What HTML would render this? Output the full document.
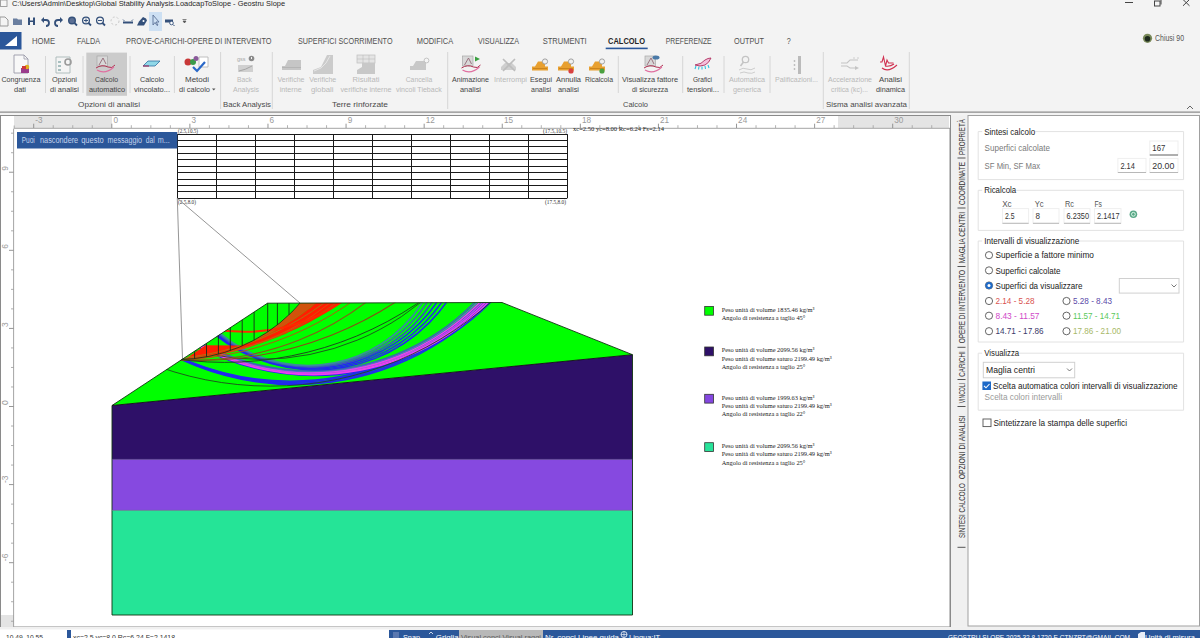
<!DOCTYPE html>
<html><head><meta charset="utf-8"><style>html,body{margin:0;padding:0;background:#f3f3f3;overflow:hidden}svg{display:block}</style></head>
<body><svg width="1200" height="638" viewBox="0 0 1200 638">
<rect x="0" y="0" width="1200" height="638" fill="#f3f3f3" stroke="none" stroke-width="1" />
<g>
<rect x="0.5" y="0" width="6.5" height="6.5" fill="#f6f6f6" stroke="#999" stroke-width="0.9" />
<text x="12" y="6.1" font-size="8" fill="#262626" font-weight="400" text-anchor="start" font-family='"Liberation Sans", sans-serif' textLength="273" lengthAdjust="spacingAndGlyphs" >C:\Users\Admin\Desktop\Global Stability Analysis.LoadcapToSlope - Geostru Slope</text>
<line x1="1125" y1="2.5" x2="1133" y2="2.5" stroke="#444" stroke-width="1" />
<rect x="1154.5" y="1" width="5.5" height="5" fill="#f3f3f3" stroke="#444" stroke-width="1" />
<path d="M1156,-0.5 h5 v5" fill="none" stroke="#444" stroke-width="1"/>
<line x1="1183" y1="-0.5" x2="1189.5" y2="5.8" stroke="#444" stroke-width="1" />
<line x1="1189.5" y1="-0.5" x2="1183" y2="5.8" stroke="#444" stroke-width="1" />
</g>
<rect x="149" y="12" width="13" height="19" fill="#cde0f3" stroke="none" stroke-width="1" />
<path d="M0,17 h5 l3,3 v6 h-8z" fill="#f4f4f4" stroke="#999" stroke-width="1"/>
<path d="M13,18.5 h4 l1,1 h4 v5.5 h-9z" fill="#6a7fa0"/>
<path d="M28,17.5 h2 v3 h3 v-3 h2 v7.5 h-2 v-3 h-3 v3 h-2z" fill="#34507a"/>
<path d="M42,20 h4 a3,3 0 0 1 0,6" fill="none" stroke="#34507a" stroke-width="1.8"/><path d="M41,20 l3,-3 v6z" fill="#34507a"/>
<path d="M62,20 h-4 a3,3 0 0 0 0,6" fill="none" stroke="#34507a" stroke-width="1.8"/><path d="M63,20 l-3,-3 v6z" fill="#34507a"/>
<circle cx="72" cy="20.5" r="3.3" fill="#5b6f94" stroke="#34507a" stroke-width="1.4"/><line x1="74.5" y1="23" x2="77" y2="25.5" stroke="#34507a" stroke-width="1.8"/>
<circle cx="86" cy="20.5" r="3.4" fill="none" stroke="#34507a" stroke-width="1.3"/><line x1="88.5" y1="23" x2="91" y2="25.5" stroke="#34507a" stroke-width="1.8"/><path d="M84,20.5h4M86,18.5v4" stroke="#34507a" stroke-width="1"/>
<circle cx="100" cy="20.5" r="3.4" fill="none" stroke="#34507a" stroke-width="1.3"/><line x1="102.5" y1="23" x2="105" y2="25.5" stroke="#34507a" stroke-width="1.8"/><path d="M98,20.5h4" stroke="#34507a" stroke-width="1"/>
<circle cx="115" cy="21" r="4" fill="none" stroke="#c8c8c8" stroke-width="1" stroke-dasharray="2,2"/>
<path d="M123,22.5 h10" stroke="#34507a" stroke-width="2"/><path d="M123,19.5 l1.5,1.5 M133,19.5 l-1.5,1.5" stroke="#34507a" stroke-width="0.8"/>
<path d="M137,25.5 l2,-4 l4,-4.5 l3,1.5 l1,2 l-3,5z" fill="#34507a"/><circle cx="143.5" cy="21" r="1" fill="#fff"/>
<path d="M153,15 v10 l2,-2.5 l2,3 l1,-0.5 l-2,-3 h3z" fill="none" stroke="#5c7399" stroke-width="0.9"/>
<path d="M165,19.5 h8 v3 h-8z" fill="#34507a"/><circle cx="171.5" cy="23" r="1.8" fill="#fff" stroke="#34507a" stroke-width="0.9"/><line x1="173" y1="24.5" x2="174.5" y2="26" stroke="#34507a" stroke-width="1"/>
<path d="M182.5,19.5 h4 M183,21 h3 l-1.5,2z" stroke="#555" stroke-width="0.7" fill="#555"/>
<rect x="0" y="32" width="21.5" height="17.5" fill="#2b579a" stroke="none" stroke-width="1" />
<path d="M5,46 L17,36 L17,46 Z" fill="#fff"/>
<text x="32" y="44.2" font-size="8.6" fill="#505050" font-weight="400" text-anchor="start" font-family='"Liberation Sans", sans-serif' textLength="23" lengthAdjust="spacingAndGlyphs" >HOME</text>
<text x="77" y="44.2" font-size="8.6" fill="#505050" font-weight="400" text-anchor="start" font-family='"Liberation Sans", sans-serif' textLength="23" lengthAdjust="spacingAndGlyphs" >FALDA</text>
<text x="126" y="44.2" font-size="8.6" fill="#505050" font-weight="400" text-anchor="start" font-family='"Liberation Sans", sans-serif' textLength="145.5" lengthAdjust="spacingAndGlyphs" >PROVE-CARICHI-OPERE DI INTERVENTO</text>
<text x="298" y="44.2" font-size="8.6" fill="#505050" font-weight="400" text-anchor="start" font-family='"Liberation Sans", sans-serif' textLength="94.5" lengthAdjust="spacingAndGlyphs" >SUPERFICI SCORRIMENTO</text>
<text x="416.7" y="44.2" font-size="8.6" fill="#505050" font-weight="400" text-anchor="start" font-family='"Liberation Sans", sans-serif' textLength="36.5" lengthAdjust="spacingAndGlyphs" >MODIFICA</text>
<text x="478" y="44.2" font-size="8.6" fill="#505050" font-weight="400" text-anchor="start" font-family='"Liberation Sans", sans-serif' textLength="41" lengthAdjust="spacingAndGlyphs" >VISUALIZZA</text>
<text x="542.7" y="44.2" font-size="8.6" fill="#505050" font-weight="400" text-anchor="start" font-family='"Liberation Sans", sans-serif' textLength="44" lengthAdjust="spacingAndGlyphs" >STRUMENTI</text>
<text x="665.7" y="44.2" font-size="8.6" fill="#505050" font-weight="400" text-anchor="start" font-family='"Liberation Sans", sans-serif' textLength="46" lengthAdjust="spacingAndGlyphs" >PREFERENZE</text>
<text x="734" y="44.2" font-size="8.6" fill="#505050" font-weight="400" text-anchor="start" font-family='"Liberation Sans", sans-serif' textLength="30" lengthAdjust="spacingAndGlyphs" >OUTPUT</text>
<text x="786.7" y="44.2" font-size="8.6" fill="#505050" font-weight="400" text-anchor="start" font-family='"Liberation Sans", sans-serif' textLength="4" lengthAdjust="spacingAndGlyphs" >?</text>
<text x="608" y="44.2" font-size="8.6" fill="#262626" font-weight="700" text-anchor="start" font-family='"Liberation Sans", sans-serif' textLength="37" lengthAdjust="spacingAndGlyphs" >CALCOLO</text>
<rect x="605.7" y="47.6" width="42" height="1.6" fill="#2b579a" stroke="none" stroke-width="1" />
<circle cx="1147.5" cy="38.3" r="4.6" fill="#7a8a5a"/><circle cx="1147.5" cy="38.8" r="2.8" fill="#1d2a1d"/>
<text x="1155" y="41" font-size="8.6" fill="#555" font-weight="400" text-anchor="start" font-family='"Liberation Sans", sans-serif' textLength="29" lengthAdjust="spacingAndGlyphs" >Chiusi 90</text>
<rect x="86.3" y="52.6" width="40.7" height="43.2" fill="#cbcbcb" stroke="none" stroke-width="1" />
<text x="1.4" y="82" font-size="7.5" fill="#454545" font-weight="400" text-anchor="start" font-family='"Liberation Sans", sans-serif' textLength="39" lengthAdjust="spacingAndGlyphs" >Congruenza</text>
<text x="14" y="92" font-size="7.5" fill="#454545" font-weight="400" text-anchor="start" font-family='"Liberation Sans", sans-serif' textLength="12" lengthAdjust="spacingAndGlyphs" >dati</text>
<text x="52" y="82" font-size="7.5" fill="#454545" font-weight="400" text-anchor="start" font-family='"Liberation Sans", sans-serif' textLength="25" lengthAdjust="spacingAndGlyphs" >Opzioni</text>
<text x="50" y="92" font-size="7.5" fill="#454545" font-weight="400" text-anchor="start" font-family='"Liberation Sans", sans-serif' textLength="29" lengthAdjust="spacingAndGlyphs" >di analisi</text>
<text x="95" y="82" font-size="7.5" fill="#454545" font-weight="400" text-anchor="start" font-family='"Liberation Sans", sans-serif' textLength="23" lengthAdjust="spacingAndGlyphs" >Calcolo</text>
<text x="89" y="92" font-size="7.5" fill="#454545" font-weight="400" text-anchor="start" font-family='"Liberation Sans", sans-serif' textLength="36" lengthAdjust="spacingAndGlyphs" >automatico</text>
<text x="140" y="82" font-size="7.5" fill="#454545" font-weight="400" text-anchor="start" font-family='"Liberation Sans", sans-serif' textLength="24" lengthAdjust="spacingAndGlyphs" >Calcolo</text>
<text x="134" y="92" font-size="7.5" fill="#454545" font-weight="400" text-anchor="start" font-family='"Liberation Sans", sans-serif' textLength="36" lengthAdjust="spacingAndGlyphs" >vincolato...</text>
<text x="185" y="82" font-size="7.5" fill="#454545" font-weight="400" text-anchor="start" font-family='"Liberation Sans", sans-serif' textLength="24" lengthAdjust="spacingAndGlyphs" >Metodi</text>
<text x="179" y="92" font-size="7.5" fill="#454545" font-weight="400" text-anchor="start" font-family='"Liberation Sans", sans-serif' textLength="31" lengthAdjust="spacingAndGlyphs" >di calcolo</text>
<text x="237" y="82" font-size="7.5" fill="#b9b9b9" font-weight="400" text-anchor="start" font-family='"Liberation Sans", sans-serif' textLength="15" lengthAdjust="spacingAndGlyphs" >Back</text>
<text x="233" y="92" font-size="7.5" fill="#b9b9b9" font-weight="400" text-anchor="start" font-family='"Liberation Sans", sans-serif' textLength="26" lengthAdjust="spacingAndGlyphs" >Analysis</text>
<text x="277.5" y="82" font-size="7.5" fill="#b9b9b9" font-weight="400" text-anchor="start" font-family='"Liberation Sans", sans-serif' textLength="27" lengthAdjust="spacingAndGlyphs" >Verifiche</text>
<text x="279.7" y="92" font-size="7.5" fill="#b9b9b9" font-weight="400" text-anchor="start" font-family='"Liberation Sans", sans-serif' textLength="22" lengthAdjust="spacingAndGlyphs" >interne</text>
<text x="309.3" y="82" font-size="7.5" fill="#b9b9b9" font-weight="400" text-anchor="start" font-family='"Liberation Sans", sans-serif' textLength="27" lengthAdjust="spacingAndGlyphs" >Verifiche</text>
<text x="311" y="92" font-size="7.5" fill="#b9b9b9" font-weight="400" text-anchor="start" font-family='"Liberation Sans", sans-serif' textLength="22.5" lengthAdjust="spacingAndGlyphs" >globali</text>
<text x="352.5" y="82" font-size="7.5" fill="#b9b9b9" font-weight="400" text-anchor="start" font-family='"Liberation Sans", sans-serif' textLength="27" lengthAdjust="spacingAndGlyphs" >Risultati</text>
<text x="340.5" y="92" font-size="7.5" fill="#b9b9b9" font-weight="400" text-anchor="start" font-family='"Liberation Sans", sans-serif' textLength="51" lengthAdjust="spacingAndGlyphs" >verifiche interne</text>
<text x="405.7" y="82" font-size="7.5" fill="#b9b9b9" font-weight="400" text-anchor="start" font-family='"Liberation Sans", sans-serif' textLength="26.5" lengthAdjust="spacingAndGlyphs" >Cancella</text>
<text x="396" y="92" font-size="7.5" fill="#b9b9b9" font-weight="400" text-anchor="start" font-family='"Liberation Sans", sans-serif' textLength="45.7" lengthAdjust="spacingAndGlyphs" >vincoli Tieback</text>
<text x="452" y="82" font-size="7.5" fill="#454545" font-weight="400" text-anchor="start" font-family='"Liberation Sans", sans-serif' textLength="37" lengthAdjust="spacingAndGlyphs" >Animazione</text>
<text x="460" y="92" font-size="7.5" fill="#454545" font-weight="400" text-anchor="start" font-family='"Liberation Sans", sans-serif' textLength="21" lengthAdjust="spacingAndGlyphs" >analisi</text>
<text x="494" y="82" font-size="7.5" fill="#b9b9b9" font-weight="400" text-anchor="start" font-family='"Liberation Sans", sans-serif' textLength="33" lengthAdjust="spacingAndGlyphs" >Interrompi</text>
<text x="530" y="82" font-size="7.5" fill="#454545" font-weight="400" text-anchor="start" font-family='"Liberation Sans", sans-serif' textLength="22" lengthAdjust="spacingAndGlyphs" >Esegui</text>
<text x="531" y="92" font-size="7.5" fill="#454545" font-weight="400" text-anchor="start" font-family='"Liberation Sans", sans-serif' textLength="20" lengthAdjust="spacingAndGlyphs" >analisi</text>
<text x="556" y="82" font-size="7.5" fill="#454545" font-weight="400" text-anchor="start" font-family='"Liberation Sans", sans-serif' textLength="25" lengthAdjust="spacingAndGlyphs" >Annulla</text>
<text x="558" y="92" font-size="7.5" fill="#454545" font-weight="400" text-anchor="start" font-family='"Liberation Sans", sans-serif' textLength="21" lengthAdjust="spacingAndGlyphs" >analisi</text>
<text x="585" y="82" font-size="7.5" fill="#454545" font-weight="400" text-anchor="start" font-family='"Liberation Sans", sans-serif' textLength="28" lengthAdjust="spacingAndGlyphs" >Ricalcola</text>
<text x="622" y="82" font-size="7.5" fill="#454545" font-weight="400" text-anchor="start" font-family='"Liberation Sans", sans-serif' textLength="56" lengthAdjust="spacingAndGlyphs" >Visualizza fattore</text>
<text x="632" y="92" font-size="7.5" fill="#454545" font-weight="400" text-anchor="start" font-family='"Liberation Sans", sans-serif' textLength="36" lengthAdjust="spacingAndGlyphs" >di sicurezza</text>
<text x="693" y="82" font-size="7.5" fill="#454545" font-weight="400" text-anchor="start" font-family='"Liberation Sans", sans-serif' textLength="19" lengthAdjust="spacingAndGlyphs" >Grafici</text>
<text x="687" y="92" font-size="7.5" fill="#454545" font-weight="400" text-anchor="start" font-family='"Liberation Sans", sans-serif' textLength="32" lengthAdjust="spacingAndGlyphs" >tensioni...</text>
<text x="729" y="82" font-size="7.5" fill="#b9b9b9" font-weight="400" text-anchor="start" font-family='"Liberation Sans", sans-serif' textLength="36" lengthAdjust="spacingAndGlyphs" >Automatica</text>
<text x="733" y="92" font-size="7.5" fill="#b9b9b9" font-weight="400" text-anchor="start" font-family='"Liberation Sans", sans-serif' textLength="28" lengthAdjust="spacingAndGlyphs" >generica</text>
<text x="775" y="82" font-size="7.5" fill="#b9b9b9" font-weight="400" text-anchor="start" font-family='"Liberation Sans", sans-serif' textLength="43" lengthAdjust="spacingAndGlyphs" >Palificazioni...</text>
<text x="828" y="82" font-size="7.5" fill="#b9b9b9" font-weight="400" text-anchor="start" font-family='"Liberation Sans", sans-serif' textLength="44" lengthAdjust="spacingAndGlyphs" >Accelerazione</text>
<text x="831" y="92" font-size="7.5" fill="#b9b9b9" font-weight="400" text-anchor="start" font-family='"Liberation Sans", sans-serif' textLength="37" lengthAdjust="spacingAndGlyphs" >critica (kc)...</text>
<text x="879" y="82" font-size="7.5" fill="#454545" font-weight="400" text-anchor="start" font-family='"Liberation Sans", sans-serif' textLength="23" lengthAdjust="spacingAndGlyphs" >Analisi</text>
<text x="876" y="92" font-size="7.5" fill="#454545" font-weight="400" text-anchor="start" font-family='"Liberation Sans", sans-serif' textLength="29" lengthAdjust="spacingAndGlyphs" >dinamica</text>
<path d="M212,88.5 h3.5 l-1.75,2z" fill="#555"/>
<text x="78" y="107.3" font-size="8" fill="#4a4a4a" font-weight="400" text-anchor="start" font-family='"Liberation Sans", sans-serif' textLength="62" lengthAdjust="spacingAndGlyphs" >Opzioni di analisi</text>
<text x="223" y="107.3" font-size="8" fill="#4a4a4a" font-weight="400" text-anchor="start" font-family='"Liberation Sans", sans-serif' textLength="48" lengthAdjust="spacingAndGlyphs" >Back Analysis</text>
<text x="332" y="107.3" font-size="8" fill="#4a4a4a" font-weight="400" text-anchor="start" font-family='"Liberation Sans", sans-serif' textLength="56" lengthAdjust="spacingAndGlyphs" >Terre rinforzate</text>
<text x="623" y="107.3" font-size="8" fill="#4a4a4a" font-weight="400" text-anchor="start" font-family='"Liberation Sans", sans-serif' textLength="25" lengthAdjust="spacingAndGlyphs" >Calcolo</text>
<text x="826" y="107.3" font-size="8" fill="#4a4a4a" font-weight="400" text-anchor="start" font-family='"Liberation Sans", sans-serif' textLength="81" lengthAdjust="spacingAndGlyphs" >Sisma analisi avanzata</text>
<line x1="45.5" y1="56" x2="45.5" y2="93" stroke="#d6d6d6" stroke-width="1" />
<line x1="83" y1="56" x2="83" y2="93" stroke="#d6d6d6" stroke-width="1" />
<line x1="130" y1="56" x2="130" y2="93" stroke="#d6d6d6" stroke-width="1" />
<line x1="174.4" y1="56" x2="174.4" y2="93" stroke="#d6d6d6" stroke-width="1" />
<line x1="618.3" y1="56" x2="618.3" y2="93" stroke="#d6d6d6" stroke-width="1" />
<line x1="682.7" y1="56" x2="682.7" y2="93" stroke="#d6d6d6" stroke-width="1" />
<line x1="724" y1="56" x2="724" y2="93" stroke="#d6d6d6" stroke-width="1" />
<line x1="770" y1="56" x2="770" y2="93" stroke="#d6d6d6" stroke-width="1" />
<line x1="220.6" y1="52" x2="220.6" y2="109" stroke="#d6d6d6" stroke-width="1" />
<line x1="272.3" y1="52" x2="272.3" y2="109" stroke="#d6d6d6" stroke-width="1" />
<line x1="447.7" y1="52" x2="447.7" y2="109" stroke="#d6d6d6" stroke-width="1" />
<line x1="823.3" y1="52" x2="823.3" y2="109" stroke="#d6d6d6" stroke-width="1" />
<line x1="909.3" y1="52" x2="909.3" y2="109" stroke="#d6d6d6" stroke-width="1" />
<path d="M1187,109 l3,-3 l3,3" fill="none" stroke="#555" stroke-width="0.9"/>
<path d="M14,55 h10 l4,4 v14 h-14z" fill="#f8f8f8" stroke="#9a9aa8" stroke-width="0.9"/><path d="M24,55 v4 h4" fill="none" stroke="#9a9aa8" stroke-width="0.8"/>
<rect x="21" y="68" width="8" height="5" fill="#9a3c8c"/><circle cx="27" cy="67" r="2.3" fill="#e0b020"/><rect x="22" y="66" width="4" height="3" fill="#d03838"/>
<path d="M56,57 h14 v16 h-14z" fill="#f4f4f4" stroke="#a8b8b8" stroke-width="0.9"/><circle cx="68" cy="62" r="3" fill="none" stroke="#9a9a9a" stroke-width="1.6"/><path d="M58,62 h3 M58,66 h3 M58,70 h3" stroke="#5a8a8a" stroke-width="1.2"/>
<rect x="97" y="56" width="10.5" height="10" fill="#d8d8d8" stroke="#a8a8a8" stroke-width="0.7"/><path d="M99,65 l4,-7 l3,6" fill="none" stroke="#8a5a6a" stroke-width="0.8"/><path d="M96,68 q6,-4 12,-1 q4,2 7,-2" fill="none" stroke="#b03050" stroke-width="1"/><path d="M97,70 q8,5 17,-3" fill="none" stroke="#e070a0" stroke-width="1.1"/>
<path d="M143,66 l5,-5 h12 l-5,5z" fill="#8fd8e8" stroke="#3070a0" stroke-width="0.8"/><path d="M143,66 h6" stroke="#a03060" stroke-width="1.2"/>
<path d="M199,57 h9 v10 h-9z" fill="#fff" stroke="#b0b0b0" stroke-width="0.8"/><circle cx="188" cy="62" r="3.5" fill="#c83838"/><circle cx="193" cy="62" r="3" fill="#3a9a4a"/><circle cx="196" cy="58.5" r="2.5" fill="#8a5a9a"/><path d="M193,67 l4,4 l8,-9" fill="none" stroke="#2a68c8" stroke-width="2.2"/>
<circle cx="251.5" cy="58.5" r="2.8" fill="#8a8a8a"/><path d="M251.5,57v2" stroke="#fff" stroke-width="0.9"/><text x="237" y="61" font-size="5.5" fill="#a8a8a8" font-family='"Liberation Sans"'>gss</text><rect x="238" y="65" width="15" height="7" fill="#d0d0d0"/><path d="M239,71 q6,-1 13,-5" fill="none" stroke="#a0a0a0" stroke-width="0.9"/>
<path d="M282,70 v-4 h3 l3,-6 h13 v10z" fill="#c6c6c6"/><path d="M282,67.5 h19" stroke="#aaa" stroke-width="0.6"/>
<path d="M313,74 v-4 l8,-3 l6,-12 h6 v19z" fill="#cbcbcb"/><path d="M314,71 q8,-2 12,-8 l4,-7" fill="none" stroke="#e8e8e8" stroke-width="0.9"/>
<rect x="357" y="55" width="18" height="8" fill="#e4e4e4" stroke="#bdbdbd" stroke-width="0.7"/><path d="M363,55v8M369,55v8M357,59h18" stroke="#bdbdbd" stroke-width="0.6"/><path d="M357,74 v-4 l5,-3 v-4 h13 v11z" fill="#c8c8c8"/>
<path d="M410,70 v-4 h3 l3,-5 h10 v9z" fill="#c8c8c8"/><circle cx="426.5" cy="60.5" r="2.4" fill="#f4f4f4" stroke="#bdbdbd" stroke-width="0.9"/>
<rect x="462.5" y="56" width="10.5" height="10" fill="#d8d8d8" stroke="#a8a8a8" stroke-width="0.7"/><path d="M464.5,65 l4,-7 l3,6" fill="none" stroke="#8a5a6a" stroke-width="0.8"/><path d="M461.5,68 q6,-4 12,-1 q4,2 7,-2" fill="none" stroke="#b03050" stroke-width="1"/><path d="M462.5,70 q8,5 17,-3" fill="none" stroke="#e070a0" stroke-width="1.1"/><path d="M475,56.5 l5,2.5 l-5,2.5z" fill="#3aa040"/>
<path d="M501,70 v-3 l4,-4 h7 l4,4 v3z" fill="#cfcfcf"/><path d="M503,59 l12,12 M515,59 l-12,12" stroke="#bdbdbd" stroke-width="1.6"/>
<path d="M532,70.5 v-4 h3 l3,-5 h7 v5 h3 v4z" fill="#e8a030"/><path d="M533,68.5 h14" stroke="#b87010" stroke-width="0.6"/><circle cx="545" cy="61.5" r="2.6" fill="#f0f0f0" stroke="#999" stroke-width="0.9"/>
<path d="M558,70.5 v-4 h3 l3,-5 h7 v5 h3 v4z" fill="#e8a030"/><path d="M559,68.5 h14" stroke="#b87010" stroke-width="0.6"/><circle cx="571" cy="61.5" r="2.6" fill="#f0f0f0" stroke="#999" stroke-width="0.9"/>
<circle cx="571" cy="71" r="2.6" fill="#d84040"/>
<path d="M589,70.5 v-4 h3 l3,-5 h7 v5 h3 v4z" fill="#e8a030"/><path d="M590,68.5 h14" stroke="#b87010" stroke-width="0.6"/><circle cx="602" cy="61.5" r="2.6" fill="#f0f0f0" stroke="#999" stroke-width="0.9"/>
<circle cx="602" cy="71" r="2.6" fill="#4aa040"/>
<rect x="645" y="56" width="10.5" height="10" fill="#d8d8d8" stroke="#a8a8a8" stroke-width="0.7"/><path d="M647,65 l4,-7 l3,6" fill="none" stroke="#8a5a6a" stroke-width="0.8"/><path d="M644,68 q6,-4 12,-1 q4,2 7,-2" fill="none" stroke="#b03050" stroke-width="1"/><path d="M645,70 q8,5 17,-3" fill="none" stroke="#e070a0" stroke-width="1.1"/><ellipse cx="656" cy="57.5" rx="3.5" ry="2" fill="#4a7aa8"/>
<path d="M695,65 q7,-1 10,-5 q3,-2 6,-2 q-2,5 -6,7 q-5,2 -10,0z" fill="#f4c0dc" stroke="#b03060" stroke-width="0.9"/><path d="M696,66 l-1,3 M699,66.5 l-0.5,3 M702,66.5 v3 M705,66 l0.5,3 M708,65 l1,3" stroke="#30c0e0" stroke-width="1.1"/>
<circle cx="745.5" cy="59.5" r="3.2" fill="none" stroke="#c4c4c4" stroke-width="1.3"/><path d="M743.5,62 l-3,4" stroke="#c4c4c4" stroke-width="1.6"/><path d="M739,70 q4,-3 8,-1 q4,2 8,-1 M740,73 q4,-2 8,0 q4,1 7,-1" fill="none" stroke="#c8c8c8" stroke-width="0.9"/>
<rect x="798" y="56" width="3" height="18" fill="#bbbbbb"/><circle cx="794.5" cy="61" r="0.9" fill="#bbb"/><circle cx="794.5" cy="65" r="0.9" fill="#bbb"/><circle cx="794.5" cy="69" r="0.9" fill="#bbb"/>
<path d="M841,63 h6 l3,-3 h8 M841,66 h6 l3,2 h6" fill="none" stroke="#c4c4c4" stroke-width="1.1"/><path d="M855,66 l4,2 l-4,2z" fill="#c4c4c4"/><path d="M853,58 h2 M857,58 h2" stroke="#c4c4c4" stroke-width="0.8"/>
<path d="M880,62 h2 l1.5,-5 l2,9 l1.5,-6 l1.5,3 h5" fill="none" stroke="#d03050" stroke-width="1.1"/><path d="M882,68 q6,5 15,-3 M885,66 q5,1 9,-2" fill="none" stroke="#d03050" stroke-width="1.1"/>
<line x1="0" y1="112.2" x2="1200" y2="112.2" stroke="#8c8c8c" stroke-width="1.2" />
<rect x="0.5" y="115.5" width="949.5" height="511.5" fill="#fff" stroke="#8a8a8a" stroke-width="1" />
<rect x="1" y="116" width="949" height="12" fill="#fff" stroke="none" stroke-width="1" />
<rect x="14" y="116" width="98" height="12" fill="#e4e4e4" stroke="none" stroke-width="1" />
<rect x="838" y="116" width="111" height="12" fill="#e4e4e4" stroke="none" stroke-width="1" />
<line x1="14" y1="128.3" x2="950" y2="128.3" stroke="#9a9a9a" stroke-width="0.9" />
<line x1="33.709999999999994" y1="123.7" x2="33.709999999999994" y2="128" stroke="#8a8a8a" stroke-width="0.9" />
<text x="35.3" y="122.9" font-size="8.2" fill="#9a9a9a" font-weight="400" text-anchor="start" font-family='"Liberation Sans", sans-serif' >-3</text>
<line x1="53.232499999999995" y1="125.2" x2="53.232499999999995" y2="128" stroke="#a0a0a0" stroke-width="0.8" />
<line x1="72.755" y1="125.2" x2="72.755" y2="128" stroke="#a0a0a0" stroke-width="0.8" />
<line x1="92.2775" y1="125.2" x2="92.2775" y2="128" stroke="#a0a0a0" stroke-width="0.8" />
<line x1="111.8" y1="123.7" x2="111.8" y2="128" stroke="#8a8a8a" stroke-width="0.9" />
<text x="113.4" y="122.9" font-size="8.2" fill="#9a9a9a" font-weight="400" text-anchor="start" font-family='"Liberation Sans", sans-serif' >0</text>
<line x1="131.3225" y1="125.2" x2="131.3225" y2="128" stroke="#a0a0a0" stroke-width="0.8" />
<line x1="150.845" y1="125.2" x2="150.845" y2="128" stroke="#a0a0a0" stroke-width="0.8" />
<line x1="170.3675" y1="125.2" x2="170.3675" y2="128" stroke="#a0a0a0" stroke-width="0.8" />
<line x1="189.89" y1="123.7" x2="189.89" y2="128" stroke="#8a8a8a" stroke-width="0.9" />
<text x="191.5" y="122.9" font-size="8.2" fill="#9a9a9a" font-weight="400" text-anchor="start" font-family='"Liberation Sans", sans-serif' >3</text>
<line x1="209.41250000000002" y1="125.2" x2="209.41250000000002" y2="128" stroke="#a0a0a0" stroke-width="0.8" />
<line x1="228.935" y1="125.2" x2="228.935" y2="128" stroke="#a0a0a0" stroke-width="0.8" />
<line x1="248.45749999999998" y1="125.2" x2="248.45749999999998" y2="128" stroke="#a0a0a0" stroke-width="0.8" />
<line x1="267.98" y1="123.7" x2="267.98" y2="128" stroke="#8a8a8a" stroke-width="0.9" />
<text x="269.6" y="122.9" font-size="8.2" fill="#9a9a9a" font-weight="400" text-anchor="start" font-family='"Liberation Sans", sans-serif' >6</text>
<line x1="287.5025" y1="125.2" x2="287.5025" y2="128" stroke="#a0a0a0" stroke-width="0.8" />
<line x1="307.02500000000003" y1="125.2" x2="307.02500000000003" y2="128" stroke="#a0a0a0" stroke-width="0.8" />
<line x1="326.5475" y1="125.2" x2="326.5475" y2="128" stroke="#a0a0a0" stroke-width="0.8" />
<line x1="346.07" y1="123.7" x2="346.07" y2="128" stroke="#8a8a8a" stroke-width="0.9" />
<text x="347.7" y="122.9" font-size="8.2" fill="#9a9a9a" font-weight="400" text-anchor="start" font-family='"Liberation Sans", sans-serif' >9</text>
<line x1="365.59250000000003" y1="125.2" x2="365.59250000000003" y2="128" stroke="#a0a0a0" stroke-width="0.8" />
<line x1="385.115" y1="125.2" x2="385.115" y2="128" stroke="#a0a0a0" stroke-width="0.8" />
<line x1="404.63750000000005" y1="125.2" x2="404.63750000000005" y2="128" stroke="#a0a0a0" stroke-width="0.8" />
<line x1="424.16" y1="123.7" x2="424.16" y2="128" stroke="#8a8a8a" stroke-width="0.9" />
<text x="425.8" y="122.9" font-size="8.2" fill="#9a9a9a" font-weight="400" text-anchor="start" font-family='"Liberation Sans", sans-serif' >12</text>
<line x1="443.6825" y1="125.2" x2="443.6825" y2="128" stroke="#a0a0a0" stroke-width="0.8" />
<line x1="463.20500000000004" y1="125.2" x2="463.20500000000004" y2="128" stroke="#a0a0a0" stroke-width="0.8" />
<line x1="482.7275" y1="125.2" x2="482.7275" y2="128" stroke="#a0a0a0" stroke-width="0.8" />
<line x1="502.25000000000006" y1="123.7" x2="502.25000000000006" y2="128" stroke="#8a8a8a" stroke-width="0.9" />
<text x="503.9" y="122.9" font-size="8.2" fill="#9a9a9a" font-weight="400" text-anchor="start" font-family='"Liberation Sans", sans-serif' >15</text>
<line x1="521.7725" y1="125.2" x2="521.7725" y2="128" stroke="#a0a0a0" stroke-width="0.8" />
<line x1="541.295" y1="125.2" x2="541.295" y2="128" stroke="#a0a0a0" stroke-width="0.8" />
<line x1="560.8175" y1="125.2" x2="560.8175" y2="128" stroke="#a0a0a0" stroke-width="0.8" />
<line x1="580.34" y1="123.7" x2="580.34" y2="128" stroke="#8a8a8a" stroke-width="0.9" />
<text x="581.9" y="122.9" font-size="8.2" fill="#9a9a9a" font-weight="400" text-anchor="start" font-family='"Liberation Sans", sans-serif' >18</text>
<line x1="599.8625" y1="125.2" x2="599.8625" y2="128" stroke="#a0a0a0" stroke-width="0.8" />
<line x1="619.385" y1="125.2" x2="619.385" y2="128" stroke="#a0a0a0" stroke-width="0.8" />
<line x1="638.9075" y1="125.2" x2="638.9075" y2="128" stroke="#a0a0a0" stroke-width="0.8" />
<line x1="658.43" y1="123.7" x2="658.43" y2="128" stroke="#8a8a8a" stroke-width="0.9" />
<text x="660.0" y="122.9" font-size="8.2" fill="#9a9a9a" font-weight="400" text-anchor="start" font-family='"Liberation Sans", sans-serif' >21</text>
<line x1="677.9525" y1="125.2" x2="677.9525" y2="128" stroke="#a0a0a0" stroke-width="0.8" />
<line x1="697.475" y1="125.2" x2="697.475" y2="128" stroke="#a0a0a0" stroke-width="0.8" />
<line x1="716.9975" y1="125.2" x2="716.9975" y2="128" stroke="#a0a0a0" stroke-width="0.8" />
<line x1="736.52" y1="123.7" x2="736.52" y2="128" stroke="#8a8a8a" stroke-width="0.9" />
<text x="738.1" y="122.9" font-size="8.2" fill="#9a9a9a" font-weight="400" text-anchor="start" font-family='"Liberation Sans", sans-serif' >24</text>
<line x1="756.0425" y1="125.2" x2="756.0425" y2="128" stroke="#a0a0a0" stroke-width="0.8" />
<line x1="775.5649999999999" y1="125.2" x2="775.5649999999999" y2="128" stroke="#a0a0a0" stroke-width="0.8" />
<line x1="795.0875" y1="125.2" x2="795.0875" y2="128" stroke="#a0a0a0" stroke-width="0.8" />
<line x1="814.61" y1="123.7" x2="814.61" y2="128" stroke="#8a8a8a" stroke-width="0.9" />
<text x="816.2" y="122.9" font-size="8.2" fill="#9a9a9a" font-weight="400" text-anchor="start" font-family='"Liberation Sans", sans-serif' >27</text>
<line x1="834.1324999999999" y1="125.2" x2="834.1324999999999" y2="128" stroke="#a0a0a0" stroke-width="0.8" />
<line x1="853.655" y1="125.2" x2="853.655" y2="128" stroke="#a0a0a0" stroke-width="0.8" />
<line x1="873.1775" y1="125.2" x2="873.1775" y2="128" stroke="#a0a0a0" stroke-width="0.8" />
<line x1="892.7" y1="123.7" x2="892.7" y2="128" stroke="#8a8a8a" stroke-width="0.9" />
<text x="894.3" y="122.9" font-size="8.2" fill="#9a9a9a" font-weight="400" text-anchor="start" font-family='"Liberation Sans", sans-serif' >30</text>
<line x1="912.2225" y1="125.2" x2="912.2225" y2="128" stroke="#a0a0a0" stroke-width="0.8" />
<line x1="931.745" y1="125.2" x2="931.745" y2="128" stroke="#a0a0a0" stroke-width="0.8" />
<line x1="14.187499999999986" y1="125.5" x2="14.187499999999986" y2="128" stroke="#9a9a9a" stroke-width="0.8" />
<rect x="1" y="128.5" width="13" height="498" fill="#fff" stroke="none" stroke-width="1" />
<rect x="1" y="615" width="13" height="11.5" fill="#e4e4e4" stroke="none" stroke-width="1" />
<line x1="13.6" y1="128.5" x2="13.6" y2="627" stroke="#9a9a9a" stroke-width="0.9" />
<line x1="11" y1="133.185" x2="13.6" y2="133.185" stroke="#9a9a9a" stroke-width="0.8" />
<line x1="11" y1="152.70749999999998" x2="13.6" y2="152.70749999999998" stroke="#9a9a9a" stroke-width="0.8" />
<line x1="9" y1="172.23" x2="13.6" y2="172.23" stroke="#8a8a8a" stroke-width="0.9" />
<text transform="translate(7.5,170.73) rotate(-90)" font-size="8.5" fill="#9a9a9a" font-family='"Liberation Sans", sans-serif'>9</text>
<line x1="11" y1="191.7525" x2="13.6" y2="191.7525" stroke="#9a9a9a" stroke-width="0.8" />
<line x1="11" y1="211.27499999999998" x2="13.6" y2="211.27499999999998" stroke="#9a9a9a" stroke-width="0.8" />
<line x1="11" y1="230.79749999999999" x2="13.6" y2="230.79749999999999" stroke="#9a9a9a" stroke-width="0.8" />
<line x1="9" y1="250.32" x2="13.6" y2="250.32" stroke="#8a8a8a" stroke-width="0.9" />
<text transform="translate(7.5,248.82) rotate(-90)" font-size="8.5" fill="#9a9a9a" font-family='"Liberation Sans", sans-serif'>6</text>
<line x1="11" y1="269.8425" x2="13.6" y2="269.8425" stroke="#9a9a9a" stroke-width="0.8" />
<line x1="11" y1="289.365" x2="13.6" y2="289.365" stroke="#9a9a9a" stroke-width="0.8" />
<line x1="11" y1="308.8875" x2="13.6" y2="308.8875" stroke="#9a9a9a" stroke-width="0.8" />
<line x1="9" y1="328.40999999999997" x2="13.6" y2="328.40999999999997" stroke="#8a8a8a" stroke-width="0.9" />
<text transform="translate(7.5,326.90999999999997) rotate(-90)" font-size="8.5" fill="#9a9a9a" font-family='"Liberation Sans", sans-serif'>3</text>
<line x1="11" y1="347.9325" x2="13.6" y2="347.9325" stroke="#9a9a9a" stroke-width="0.8" />
<line x1="11" y1="367.455" x2="13.6" y2="367.455" stroke="#9a9a9a" stroke-width="0.8" />
<line x1="11" y1="386.9775" x2="13.6" y2="386.9775" stroke="#9a9a9a" stroke-width="0.8" />
<line x1="9" y1="406.5" x2="13.6" y2="406.5" stroke="#8a8a8a" stroke-width="0.9" />
<text transform="translate(7.5,405.0) rotate(-90)" font-size="8.5" fill="#9a9a9a" font-family='"Liberation Sans", sans-serif'>0</text>
<line x1="11" y1="426.0225" x2="13.6" y2="426.0225" stroke="#9a9a9a" stroke-width="0.8" />
<line x1="11" y1="445.545" x2="13.6" y2="445.545" stroke="#9a9a9a" stroke-width="0.8" />
<line x1="11" y1="465.0675" x2="13.6" y2="465.0675" stroke="#9a9a9a" stroke-width="0.8" />
<line x1="9" y1="484.59000000000003" x2="13.6" y2="484.59000000000003" stroke="#8a8a8a" stroke-width="0.9" />
<text transform="translate(7.5,483.09000000000003) rotate(-90)" font-size="8.5" fill="#9a9a9a" font-family='"Liberation Sans", sans-serif'>-3</text>
<line x1="11" y1="504.1125" x2="13.6" y2="504.1125" stroke="#9a9a9a" stroke-width="0.8" />
<line x1="11" y1="523.635" x2="13.6" y2="523.635" stroke="#9a9a9a" stroke-width="0.8" />
<line x1="11" y1="543.1575" x2="13.6" y2="543.1575" stroke="#9a9a9a" stroke-width="0.8" />
<line x1="9" y1="562.6800000000001" x2="13.6" y2="562.6800000000001" stroke="#8a8a8a" stroke-width="0.9" />
<text transform="translate(7.5,561.1800000000001) rotate(-90)" font-size="8.5" fill="#9a9a9a" font-family='"Liberation Sans", sans-serif'>-6</text>
<line x1="11" y1="582.2025" x2="13.6" y2="582.2025" stroke="#9a9a9a" stroke-width="0.8" />
<line x1="11" y1="601.725" x2="13.6" y2="601.725" stroke="#9a9a9a" stroke-width="0.8" />
<line x1="11" y1="621.2475" x2="13.6" y2="621.2475" stroke="#9a9a9a" stroke-width="0.8" />
<line x1="177.3" y1="134.5" x2="567" y2="134.5" stroke="#1a1a1a" stroke-width="1" />
<line x1="177.3" y1="140.5" x2="567" y2="140.5" stroke="#1a1a1a" stroke-width="1" />
<line x1="177.3" y1="146.5" x2="567" y2="146.5" stroke="#1a1a1a" stroke-width="1" />
<line x1="177.3" y1="153.5" x2="567" y2="153.5" stroke="#1a1a1a" stroke-width="1" />
<line x1="177.3" y1="159.5" x2="567" y2="159.5" stroke="#1a1a1a" stroke-width="1" />
<line x1="177.3" y1="166.5" x2="567" y2="166.5" stroke="#1a1a1a" stroke-width="1" />
<line x1="177.3" y1="172.5" x2="567" y2="172.5" stroke="#1a1a1a" stroke-width="1" />
<line x1="177.3" y1="179.5" x2="567" y2="179.5" stroke="#1a1a1a" stroke-width="1" />
<line x1="177.3" y1="185.5" x2="567" y2="185.5" stroke="#1a1a1a" stroke-width="1" />
<line x1="177.3" y1="191.5" x2="567" y2="191.5" stroke="#1a1a1a" stroke-width="1" />
<line x1="177.3" y1="198.5" x2="567" y2="198.5" stroke="#1a1a1a" stroke-width="1" />
<line x1="177.5" y1="134.1" x2="177.5" y2="198.3" stroke="#1a1a1a" stroke-width="1" />
<line x1="216.5" y1="134.1" x2="216.5" y2="198.3" stroke="#1a1a1a" stroke-width="1" />
<line x1="255.5" y1="134.1" x2="255.5" y2="198.3" stroke="#1a1a1a" stroke-width="1" />
<line x1="294.5" y1="134.1" x2="294.5" y2="198.3" stroke="#1a1a1a" stroke-width="1" />
<line x1="333.5" y1="134.1" x2="333.5" y2="198.3" stroke="#1a1a1a" stroke-width="1" />
<line x1="372.5" y1="134.1" x2="372.5" y2="198.3" stroke="#1a1a1a" stroke-width="1" />
<line x1="411.5" y1="134.1" x2="411.5" y2="198.3" stroke="#1a1a1a" stroke-width="1" />
<line x1="450.5" y1="134.1" x2="450.5" y2="198.3" stroke="#1a1a1a" stroke-width="1" />
<line x1="489.5" y1="134.1" x2="489.5" y2="198.3" stroke="#1a1a1a" stroke-width="1" />
<line x1="528.5" y1="134.1" x2="528.5" y2="198.3" stroke="#1a1a1a" stroke-width="1" />
<line x1="567.5" y1="134.1" x2="567.5" y2="198.3" stroke="#1a1a1a" stroke-width="1" />
<text x="178" y="132.6" font-size="5.5" fill="#333" font-weight="400" text-anchor="start" font-family='"Liberation Serif", serif' textLength="20" lengthAdjust="spacingAndGlyphs" >(2.5,10.5)</text>
<text x="543" y="132.6" font-size="5.5" fill="#333" font-weight="400" text-anchor="start" font-family='"Liberation Serif", serif' textLength="24" lengthAdjust="spacingAndGlyphs" >(17.5,10.5)</text>
<text x="178" y="203.5" font-size="5.5" fill="#333" font-weight="400" text-anchor="start" font-family='"Liberation Serif", serif' textLength="18" lengthAdjust="spacingAndGlyphs" >(2.5,8.0)</text>
<text x="545" y="203.5" font-size="5.5" fill="#333" font-weight="400" text-anchor="start" font-family='"Liberation Serif", serif' textLength="21" lengthAdjust="spacingAndGlyphs" >(17.5,8.0)</text>
<text x="573" y="131" font-size="6.5" fill="#222" font-weight="400" text-anchor="start" font-family='"Liberation Serif", serif' textLength="91" lengthAdjust="spacingAndGlyphs" >xc=2.50 yc=8.00 Rc=6.24 Fs=2.14</text>
<line x1="177.3" y1="198.3" x2="182.5" y2="359.5" stroke="#8a8a8a" stroke-width="0.9" />
<line x1="177.3" y1="198.3" x2="300.2" y2="303.2" stroke="#8a8a8a" stroke-width="0.9" />
<defs><clipPath id="gc"><polygon points="112,405.5 267.5,303.2 502,302.5 632.5,354.7 632.5,615 112,615"/></clipPath></defs>
<polygon points="112,405.5 267.5,303.2 502,302.5 632.5,354.7" fill="#00ff00"/>
<polygon points="112,405.5 632.5,354.7 632.5,459.3 112,459.3" fill="#2e1068"/>
<rect x="112" y="459.3" width="520.5" height="51.1" fill="#8649e0"/>
<rect x="112" y="510.4" width="520.5" height="104.6" fill="#25e497"/>
<defs><clipPath id="gl"><polygon points="112,405.5 267.5,303.2 502,302.5 632.5,354.7"/></clipPath></defs>
<g clip-path="url(#gl)">
<circle cx="294.74" cy="114.78" r="269.77" fill="none" stroke="#2228f0" stroke-width="1.6" opacity="1"/>
<circle cx="293.24" cy="113.78" r="269.64" fill="none" stroke="#2228f0" stroke-width="1.6" opacity="1"/>
<circle cx="291.73" cy="112.76" r="269.53" fill="none" stroke="#2228f0" stroke-width="1.6" opacity="1"/>
<circle cx="290.21" cy="111.72" r="269.46" fill="none" stroke="#2228f0" stroke-width="1.6" opacity="1"/>
<circle cx="314.55" cy="126.70" r="248.72" fill="none" stroke="#2228f0" stroke-width="1.5" opacity="1"/>
<circle cx="313.93" cy="128.99" r="245.66" fill="none" stroke="#f040f0" stroke-width="1.5" opacity="1"/>
<circle cx="313.32" cy="131.28" r="242.59" fill="none" stroke="#f040f0" stroke-width="1.5" opacity="1"/>
<circle cx="312.70" cy="133.58" r="239.51" fill="none" stroke="#c048e8" stroke-width="1.5" opacity="1"/>
<circle cx="312.09" cy="135.87" r="236.43" fill="none" stroke="#f040f0" stroke-width="1.5" opacity="1"/>
<circle cx="311.48" cy="138.18" r="233.35" fill="none" stroke="#5a6ad0" stroke-width="1.5" opacity="1"/>
<circle cx="310.86" cy="140.49" r="230.27" fill="none" stroke="#3a68b0" stroke-width="1.5" opacity="1"/>
<circle cx="315.56" cy="209.33" r="160.59" fill="none" stroke="#2228f0" stroke-width="1.5" opacity="1"/>
<circle cx="314.02" cy="213.51" r="155.51" fill="none" stroke="#2228f0" stroke-width="1.5" opacity="1"/>
<circle cx="312.47" cy="217.68" r="150.45" fill="none" stroke="#2228f0" stroke-width="1.5" opacity="1"/>
<circle cx="310.94" cy="221.86" r="145.41" fill="none" stroke="#3a48c8" stroke-width="1.5" opacity="1"/>
<circle cx="309.40" cy="226.02" r="140.38" fill="none" stroke="#3a68b0" stroke-width="1.5" opacity="1"/>
<circle cx="307.88" cy="230.18" r="135.37" fill="none" stroke="#3a8aa0" stroke-width="1.5" opacity="1"/>
<circle cx="270.34" cy="54.41" r="331.73" fill="none" stroke="#1f4a1f" stroke-width="0.9" opacity="1"/>
<circle cx="260.28" cy="104.90" r="254.47" fill="none" stroke="#1f4a1f" stroke-width="0.9" opacity="1"/>
<polygon points="237.0,348.1 240.0,346.9 243.0,345.6 246.0,344.2 249.0,342.8 252.0,341.2 255.0,339.7 258.0,338.0 261.0,336.2 264.0,334.3 267.0,332.4 270.0,330.4 273.0,328.2 276.0,326.0 279.0,323.6 282.0,321.1 285.0,318.5 288.0,315.8 291.0,312.9 294.0,309.9 297.0,306.7 300.0,303.3 301.0,303.0 318.0,303.0 317.0,302.1 314.0,304.7 311.0,307.1 308.0,309.5 305.0,311.7 302.0,313.9 299.0,316.1 296.0,318.1 293.0,320.1 290.0,322.0 287.0,323.9 284.0,325.7 281.0,327.4 278.0,329.1 275.0,330.7 272.0,332.2 269.0,333.7 266.0,335.2 263.0,336.5 260.0,337.9 257.0,339.2 254.0,340.4 251.0,341.6 248.0,342.7 245.0,343.8 242.0,344.9 239.0,345.9" fill="#e8400c" opacity="0.9"/>
<polygon points="183.0,360.6 205.7,345.3 237.0,345.6 238.0,345.6 241.0,345.2 244.0,344.2 247.0,343.1 250.0,342.0 253.0,340.8 256.0,339.6 259.0,338.3 262.0,337.0 265.0,335.6 268.0,334.2 271.0,332.7 274.0,331.2 277.0,329.6 280.0,327.9 283.0,326.2 286.0,324.5 289.0,322.6 292.0,320.7 295.0,318.8 298.0,316.8 301.0,314.7 304.0,312.5 307.0,310.2 310.0,307.9 313.0,305.5 316.0,303.0 318.0,303.0 341.5,303.0 341.0,303.3 337.0,306.0 333.0,308.5 329.0,311.0 325.0,313.4 321.0,315.8 317.0,318.0 313.0,320.2 309.0,322.4 305.0,324.4 301.0,326.4 297.0,328.4 293.0,330.3 289.0,332.1 285.0,333.9 281.0,335.6 277.0,337.2 273.0,338.8 269.0,340.3 265.0,341.8 261.0,343.3 257.0,344.6 253.0,345.9 249.0,347.2 245.0,348.4 241.0,349.6 237.0,350.7 233.0,351.8 229.0,352.8 225.0,353.8 221.0,354.7 217.0,355.5 213.0,356.4 209.0,357.1 205.0,357.9 201.0,358.5 197.0,359.2 193.0,359.7 189.0,360.3 185.0,360.8 183.0,361.0" fill="#ff1e00"/>
<circle cx="169.06" cy="102.31" r="257.25" fill="none" stroke="#d06010" stroke-width="0.7" opacity="1"/>
<circle cx="153.81" cy="73.93" r="285.37" fill="none" stroke="#80a818" stroke-width="0.6" opacity="1"/>
<circle cx="163.27" cy="64.83" r="294.21" fill="none" stroke="#a07a18" stroke-width="0.6" opacity="1"/>
<circle cx="244.69" cy="160.12" r="171.75" fill="none" stroke="#ff2800" stroke-width="2.0" opacity="1"/>
<circle cx="166.73" cy="39.47" r="320.99" fill="none" stroke="#b05a10" stroke-width="1.0" opacity="1"/>
<circle cx="194.40" cy="77.15" r="283.05" fill="none" stroke="#8a5a18" stroke-width="1.1" opacity="1"/>
<circle cx="199.70" cy="2.49" r="357.86" fill="none" stroke="#8a4a18" stroke-width="1.1" opacity="1"/>
<circle cx="224.42" cy="17.12" r="345.26" fill="none" stroke="#1f4a1f" stroke-width="1" opacity="1"/>
</g>
<g clip-path="url(#gl)"><circle cx="177.3" cy="197.5" r="162" fill="none" stroke="#1a3a1a" stroke-width="0.9"/></g>
<line x1="194.6" y1="351.1492" x2="194.6" y2="358.57361670987586" stroke="#1a2a1a" stroke-width="0.9" />
<line x1="206.5" y1="343.319" x2="206.5" y2="356.8466661088333" stroke="#1a2a1a" stroke-width="0.9" />
<line x1="218.4" y1="335.48879999999997" x2="218.4" y2="354.1996809186286" stroke="#1a2a1a" stroke-width="0.9" />
<line x1="230.3" y1="327.6586" x2="230.3" y2="350.5849437403953" stroke="#1a2a1a" stroke-width="0.9" />
<line x1="242.2" y1="319.8284" x2="242.2" y2="345.93176883672845" stroke="#1a2a1a" stroke-width="0.9" />
<line x1="254.1" y1="311.9982" x2="254.1" y2="340.1385642103846" stroke="#1a2a1a" stroke-width="0.9" />
<line x1="267.7" y1="303.2" x2="267.7" y2="331.93154391734106" stroke="#1a2a1a" stroke-width="0.9" />
<line x1="277.4" y1="303.2" x2="277.4" y2="324.87342737007594" stroke="#1a2a1a" stroke-width="0.9" />
<line x1="289" y1="303.2" x2="289" y2="314.83332859848474" stroke="#1a2a1a" stroke-width="0.9" />
<polygon points="112,405.5 267.5,303.2 502,302.5 632.5,354.7 632.5,615 112,615" fill="none" stroke="#113311" stroke-width="0.9"/>
<line x1="112" y1="405.5" x2="632.5" y2="354.7" stroke="#111" stroke-width="0.9" />
<line x1="112" y1="459.3" x2="632.5" y2="459.3" stroke="#4a3a7a" stroke-width="0.8" />
<line x1="112" y1="510.4" x2="632.5" y2="510.4" stroke="#5a7a8a" stroke-width="0.8" />
<rect x="704.7" y="306.4" width="8.8" height="8.8" fill="#00ff00" stroke="#333" stroke-width="0.8" />
<text x="721.7" y="311.79999999999995" font-size="6.4" fill="#1a1a1a" font-weight="400" text-anchor="start" font-family='"Liberation Serif", serif' >Peso unità di volume 1835.46 kg/m³</text>
<text x="721.7" y="320.09999999999997" font-size="6.4" fill="#1a1a1a" font-weight="400" text-anchor="start" font-family='"Liberation Serif", serif' >Angolo di resistenza a taglio 45°</text>
<rect x="704.7" y="347" width="8.8" height="8.8" fill="#2e1068" stroke="#333" stroke-width="0.8" />
<text x="721.7" y="352.4" font-size="6.4" fill="#1a1a1a" font-weight="400" text-anchor="start" font-family='"Liberation Serif", serif' >Peso unità di volume 2099.56 kg/m³</text>
<text x="721.7" y="360.7" font-size="6.4" fill="#1a1a1a" font-weight="400" text-anchor="start" font-family='"Liberation Serif", serif' >Peso unità di volume saturo 2199.49 kg/m³</text>
<text x="721.7" y="369.0" font-size="6.4" fill="#1a1a1a" font-weight="400" text-anchor="start" font-family='"Liberation Serif", serif' >Angolo di resistenza a taglio 25°</text>
<rect x="704.7" y="394.3" width="8.8" height="8.8" fill="#8447e0" stroke="#333" stroke-width="0.8" />
<text x="721.7" y="399.7" font-size="6.4" fill="#1a1a1a" font-weight="400" text-anchor="start" font-family='"Liberation Serif", serif' >Peso unità di volume 1999.63 kg/m³</text>
<text x="721.7" y="408.0" font-size="6.4" fill="#1a1a1a" font-weight="400" text-anchor="start" font-family='"Liberation Serif", serif' >Peso unità di volume saturo 2199.49 kg/m³</text>
<text x="721.7" y="416.3" font-size="6.4" fill="#1a1a1a" font-weight="400" text-anchor="start" font-family='"Liberation Serif", serif' >Angolo di resistenza a taglio 22°</text>
<rect x="704.7" y="442.7" width="8.8" height="8.8" fill="#28e39a" stroke="#333" stroke-width="0.8" />
<text x="721.7" y="448.09999999999997" font-size="6.4" fill="#1a1a1a" font-weight="400" text-anchor="start" font-family='"Liberation Serif", serif' >Peso unità di volume 2099.56 kg/m³</text>
<text x="721.7" y="456.4" font-size="6.4" fill="#1a1a1a" font-weight="400" text-anchor="start" font-family='"Liberation Serif", serif' >Peso unità di volume saturo 2199.49 kg/m³</text>
<text x="721.7" y="464.7" font-size="6.4" fill="#1a1a1a" font-weight="400" text-anchor="start" font-family='"Liberation Serif", serif' >Angolo di resistenza a taglio 25°</text>
<rect x="17" y="132" width="160.3" height="16.5" fill="#2b579a" stroke="none" stroke-width="1" />
<text x="21.7" y="143" font-size="8.4" fill="#c4d2ec" font-weight="400" text-anchor="start" font-family='"Liberation Sans", sans-serif' textLength="13.0" lengthAdjust="spacingAndGlyphs" >Puoi</text>
<text x="40" y="143" font-size="8.4" fill="#c4d2ec" font-weight="400" text-anchor="start" font-family='"Liberation Sans", sans-serif' textLength="38.2" lengthAdjust="spacingAndGlyphs" >nascondere</text>
<text x="81.2" y="143" font-size="8.4" fill="#c4d2ec" font-weight="400" text-anchor="start" font-family='"Liberation Sans", sans-serif' textLength="22.5" lengthAdjust="spacingAndGlyphs" >questo</text>
<text x="107.5" y="143" font-size="8.4" fill="#c4d2ec" font-weight="400" text-anchor="start" font-family='"Liberation Sans", sans-serif' textLength="34.5" lengthAdjust="spacingAndGlyphs" >messaggio</text>
<text x="145.7" y="143" font-size="8.4" fill="#c4d2ec" font-weight="400" text-anchor="start" font-family='"Liberation Sans", sans-serif' textLength="9.0" lengthAdjust="spacingAndGlyphs" >dal</text>
<text x="157.7" y="143" font-size="8.4" fill="#c4d2ec" font-weight="400" text-anchor="start" font-family='"Liberation Sans", sans-serif' textLength="12.0" lengthAdjust="spacingAndGlyphs" >m...</text>
<rect x="950.5" y="115.5" width="17.5" height="511" fill="#f0f0f0" stroke="none" stroke-width="1" />
<rect x="968" y="115.5" width="231.5" height="510.5" fill="#fff" stroke="#a0a0a0" stroke-width="1" />
<line x1="950.5" y1="115" x2="950.5" y2="627" stroke="#8a8a8a" stroke-width="1" />
<text transform="translate(965,154.9) rotate(-90)" font-size="8.4" fill="#333" font-family='"Liberation Sans", sans-serif' textLength="35.7" lengthAdjust="spacingAndGlyphs">PROPRIETÀ</text>
<line x1="957.5" y1="158" x2="965.5" y2="158" stroke="#555" stroke-width="1" />
<text transform="translate(965,204.9) rotate(-90)" font-size="8.4" fill="#333" font-family='"Liberation Sans", sans-serif' textLength="42.9" lengthAdjust="spacingAndGlyphs">COORDINATE</text>
<line x1="957.5" y1="208" x2="965.5" y2="208" stroke="#555" stroke-width="1" />
<text transform="translate(965,263.3) rotate(-90)" font-size="8.4" fill="#333" font-family='"Liberation Sans", sans-serif' textLength="51.3" lengthAdjust="spacingAndGlyphs">MAGLIA CENTRI</text>
<line x1="957.5" y1="266.5" x2="965.5" y2="266.5" stroke="#555" stroke-width="1" />
<text transform="translate(965,343.3) rotate(-90)" font-size="8.4" fill="#333" font-family='"Liberation Sans", sans-serif' textLength="73.3" lengthAdjust="spacingAndGlyphs">OPERE DI INTERVENTO</text>
<line x1="957.5" y1="347.3" x2="965.5" y2="347.3" stroke="#555" stroke-width="1" />
<text transform="translate(965,376.7) rotate(-90)" font-size="8.4" fill="#333" font-family='"Liberation Sans", sans-serif' textLength="25.4" lengthAdjust="spacingAndGlyphs">CARICHI</text>
<line x1="957.5" y1="379.5" x2="965.5" y2="379.5" stroke="#555" stroke-width="1" />
<text transform="translate(965,403.3) rotate(-90)" font-size="8.4" fill="#333" font-family='"Liberation Sans", sans-serif' textLength="20.3" lengthAdjust="spacingAndGlyphs">VINCOLI</text>
<line x1="957.5" y1="406.5" x2="965.5" y2="406.5" stroke="#555" stroke-width="1" />
<text transform="translate(965,479.3) rotate(-90)" font-size="8.4" fill="#333" font-family='"Liberation Sans", sans-serif' textLength="64.0" lengthAdjust="spacingAndGlyphs">OPZIONI DI ANALISI</text>
<text transform="translate(965,538) rotate(-90)" font-size="8.4" fill="#333" font-family='"Liberation Sans", sans-serif' textLength="54.7" lengthAdjust="spacingAndGlyphs">SINTESI CALCOLO</text>
<line x1="957.5" y1="547.3" x2="965.5" y2="547.3" stroke="#555" stroke-width="1" />
<path d="M982.2,131.6 H978.2 V179.6 H1183.6 V131.6 H1035.2" fill="none" stroke="#e2e2e2" stroke-width="1"/>
<text x="984.2" y="134.6" font-size="8.2" fill="#222" font-weight="400" text-anchor="start" font-family='"Liberation Sans", sans-serif' textLength="51" lengthAdjust="spacingAndGlyphs" >Sintesi calcolo</text>
<text x="984.6" y="151" font-size="8.2" fill="#7a7a7a" font-weight="400" text-anchor="start" font-family='"Liberation Sans", sans-serif' textLength="65.4" lengthAdjust="spacingAndGlyphs" >Superfici calcolate</text>
<rect x="1149.8" y="141" width="28.200000000000045" height="14" fill="#fff" stroke="#efefef" stroke-width="1" />
<line x1="1149.8" y1="155" x2="1178" y2="155" stroke="#666" stroke-width="1" />
<text x="1152.3" y="151" font-size="8.6" fill="#333" font-weight="400" text-anchor="start" font-family='"Liberation Sans", sans-serif' textLength="13" lengthAdjust="spacingAndGlyphs" >167</text>
<text x="984.6" y="168.5" font-size="8.2" fill="#7a7a7a" font-weight="400" text-anchor="start" font-family='"Liberation Sans", sans-serif' textLength="55.5" lengthAdjust="spacingAndGlyphs" >SF Min, SF Max</text>
<rect x="1117.9" y="158.4" width="28.09999999999991" height="14.099999999999994" fill="#fff" stroke="#efefef" stroke-width="1" />
<line x1="1117.9" y1="172.5" x2="1146" y2="172.5" stroke="#b8b8b8" stroke-width="1" />
<text x="1120.4" y="168.5" font-size="8.6" fill="#333" font-weight="400" text-anchor="start" font-family='"Liberation Sans", sans-serif' textLength="14.5" lengthAdjust="spacingAndGlyphs" >2.14</text>
<rect x="1149.8" y="158.4" width="28.200000000000045" height="14.099999999999994" fill="#fff" stroke="#efefef" stroke-width="1" />
<line x1="1149.8" y1="172.5" x2="1178" y2="172.5" stroke="#b8b8b8" stroke-width="1" />
<text x="1152.3" y="168.5" font-size="8.6" fill="#333" font-weight="400" text-anchor="start" font-family='"Liberation Sans", sans-serif' textLength="22" lengthAdjust="spacingAndGlyphs" >20.00</text>
<path d="M982.2,190.3 H978.2 V230.4 H1183.6 V190.3 H1016.2" fill="none" stroke="#e2e2e2" stroke-width="1"/>
<text x="984.2" y="193.3" font-size="8.2" fill="#222" font-weight="400" text-anchor="start" font-family='"Liberation Sans", sans-serif' textLength="32" lengthAdjust="spacingAndGlyphs" >Ricalcola</text>
<text x="1002.2" y="206.5" font-size="8.6" fill="#555" font-weight="400" text-anchor="start" font-family='"Liberation Sans", sans-serif' textLength="9.5" lengthAdjust="spacingAndGlyphs" >Xc</text>
<text x="1034.7" y="206.5" font-size="8.6" fill="#555" font-weight="400" text-anchor="start" font-family='"Liberation Sans", sans-serif' textLength="9" lengthAdjust="spacingAndGlyphs" >Yc</text>
<text x="1065" y="206.5" font-size="8.6" fill="#555" font-weight="400" text-anchor="start" font-family='"Liberation Sans", sans-serif' textLength="9" lengthAdjust="spacingAndGlyphs" >Rc</text>
<text x="1094.5" y="206.5" font-size="8.6" fill="#555" font-weight="400" text-anchor="start" font-family='"Liberation Sans", sans-serif' textLength="7.5" lengthAdjust="spacingAndGlyphs" >Fs</text>
<rect x="1002.5" y="208.6" width="26.09999999999991" height="14.700000000000017" fill="#fff" stroke="#efefef" stroke-width="1" />
<line x1="1002.5" y1="223.3" x2="1028.6" y2="223.3" stroke="#b8b8b8" stroke-width="1" />
<text x="1005.0" y="219.3" font-size="8.6" fill="#333" font-weight="400" text-anchor="start" font-family='"Liberation Sans", sans-serif' textLength="9.5" lengthAdjust="spacingAndGlyphs" >2.5</text>
<rect x="1033" y="208.6" width="26" height="14.700000000000017" fill="#fff" stroke="#efefef" stroke-width="1" />
<line x1="1033" y1="223.3" x2="1059" y2="223.3" stroke="#b8b8b8" stroke-width="1" />
<text x="1035.5" y="219.3" font-size="8.6" fill="#333" font-weight="400" text-anchor="start" font-family='"Liberation Sans", sans-serif' textLength="4.5" lengthAdjust="spacingAndGlyphs" >8</text>
<rect x="1064" y="208.6" width="26" height="14.700000000000017" fill="#fff" stroke="#efefef" stroke-width="1" />
<line x1="1064" y1="223.3" x2="1090" y2="223.3" stroke="#b8b8b8" stroke-width="1" />
<text x="1066.5" y="219.3" font-size="8.6" fill="#333" font-weight="400" text-anchor="start" font-family='"Liberation Sans", sans-serif' textLength="22.5" lengthAdjust="spacingAndGlyphs" >6.2350</text>
<rect x="1094.5" y="208.6" width="26.5" height="14.700000000000017" fill="#fff" stroke="#efefef" stroke-width="1" />
<line x1="1094.5" y1="223.3" x2="1121" y2="223.3" stroke="#b8b8b8" stroke-width="1" />
<text x="1097.0" y="219.3" font-size="8.6" fill="#333" font-weight="400" text-anchor="start" font-family='"Liberation Sans", sans-serif' textLength="22.5" lengthAdjust="spacingAndGlyphs" >2.1417</text>
<circle cx="1133.4" cy="214.3" r="3.8" fill="#5aa888"/><circle cx="1133.4" cy="214.3" r="1.9" fill="none" stroke="#e8fff0" stroke-width="0.9"/>
<path d="M982.2,241 H978.2 V342 H1183.6 V241 H1079.2" fill="none" stroke="#e2e2e2" stroke-width="1"/>
<text x="984.2" y="244" font-size="8.2" fill="#222" font-weight="400" text-anchor="start" font-family='"Liberation Sans", sans-serif' textLength="95" lengthAdjust="spacingAndGlyphs" >Intervalli di visualizzazione</text>
<circle cx="989" cy="255.2" r="3.6" fill="#fff" stroke="#555" stroke-width="0.9"/>
<text x="995.5" y="258.3" font-size="8.2" fill="#222" font-weight="400" text-anchor="start" font-family='"Liberation Sans", sans-serif' textLength="98.4" lengthAdjust="spacingAndGlyphs" >Superficie a fattore minimo</text>
<circle cx="989" cy="270.4" r="3.6" fill="#fff" stroke="#555" stroke-width="0.9"/>
<text x="995.5" y="273.5" font-size="8.2" fill="#222" font-weight="400" text-anchor="start" font-family='"Liberation Sans", sans-serif' textLength="65" lengthAdjust="spacingAndGlyphs" >Superfici calcolate</text>
<circle cx="989" cy="285.5" r="3.6" fill="#fff" stroke="#555" stroke-width="0.9"/>
<circle cx="989" cy="285.5" r="3.6" fill="#1e6ac8"/><circle cx="989" cy="285.5" r="1.5" fill="#fff"/>
<text x="995.5" y="288.6" font-size="8.2" fill="#222" font-weight="400" text-anchor="start" font-family='"Liberation Sans", sans-serif' textLength="87" lengthAdjust="spacingAndGlyphs" >Superfici da visualizzare</text>
<rect x="1119.3" y="278.5" width="59.7" height="14.6" fill="#fff" stroke="#d0d0d0" stroke-width="1" />
<path d="M1171.5,284.5 l2.5,2.5 l2.5,-2.5" fill="none" stroke="#555" stroke-width="0.8"/>
<circle cx="989" cy="301" r="3.6" fill="#fff" stroke="#555" stroke-width="0.9"/>
<text x="995.5" y="304.1" font-size="8.2" fill="#d9534f" font-weight="400" text-anchor="start" font-family='"Liberation Sans", sans-serif' textLength="39" lengthAdjust="spacingAndGlyphs" >2.14  -  5.28</text>
<circle cx="1066.5" cy="301" r="3.6" fill="#fff" stroke="#555" stroke-width="0.9"/>
<text x="1073" y="304.1" font-size="8.2" fill="#5a4aa8" font-weight="400" text-anchor="start" font-family='"Liberation Sans", sans-serif' textLength="39" lengthAdjust="spacingAndGlyphs" >5.28  -  8.43</text>
<circle cx="989" cy="315.7" r="3.6" fill="#fff" stroke="#555" stroke-width="0.9"/>
<text x="995.5" y="318.8" font-size="8.2" fill="#d048c8" font-weight="400" text-anchor="start" font-family='"Liberation Sans", sans-serif' textLength="44" lengthAdjust="spacingAndGlyphs" >8.43  -  11.57</text>
<circle cx="1066.5" cy="315.7" r="3.6" fill="#fff" stroke="#555" stroke-width="0.9"/>
<text x="1073" y="318.8" font-size="8.2" fill="#5ac85a" font-weight="400" text-anchor="start" font-family='"Liberation Sans", sans-serif' textLength="47" lengthAdjust="spacingAndGlyphs" >11.57  -  14.71</text>
<circle cx="989" cy="331.2" r="3.6" fill="#fff" stroke="#555" stroke-width="0.9"/>
<text x="995.5" y="334.3" font-size="8.2" fill="#3a3a6a" font-weight="400" text-anchor="start" font-family='"Liberation Sans", sans-serif' textLength="48" lengthAdjust="spacingAndGlyphs" >14.71  -  17.86</text>
<circle cx="1066.5" cy="331.2" r="3.6" fill="#fff" stroke="#555" stroke-width="0.9"/>
<text x="1073" y="334.3" font-size="8.2" fill="#a8b868" font-weight="400" text-anchor="start" font-family='"Liberation Sans", sans-serif' textLength="48" lengthAdjust="spacingAndGlyphs" >17.86  -  21.00</text>
<path d="M982.2,353.2 H978.2 V410.2 H1183.6 V353.2 H1019.2" fill="none" stroke="#e2e2e2" stroke-width="1"/>
<text x="984.2" y="356.2" font-size="8.2" fill="#222" font-weight="400" text-anchor="start" font-family='"Liberation Sans", sans-serif' textLength="35" lengthAdjust="spacingAndGlyphs" >Visualizza</text>
<rect x="983.3" y="362.3" width="91.4" height="15.5" fill="#fff" stroke="#d0d0d0" stroke-width="1" />
<text x="986" y="373.2" font-size="8.2" fill="#222" font-weight="400" text-anchor="start" font-family='"Liberation Sans", sans-serif' textLength="49" lengthAdjust="spacingAndGlyphs" >Maglia centri</text>
<path d="M1067,368.5 l2.5,2.5 l2.5,-2.5" fill="none" stroke="#555" stroke-width="0.8"/>
<rect x="982.4" y="381.5" width="8.6" height="8.5" fill="#1e6ac8" stroke="none" stroke-width="1" />
<path d="M984,385.8 l2,2 l3.5,-3.8" fill="none" stroke="#fff" stroke-width="1.1"/>
<text x="993" y="388.9" font-size="8.2" fill="#222" font-weight="400" text-anchor="start" font-family='"Liberation Sans", sans-serif' textLength="184.6" lengthAdjust="spacingAndGlyphs" >Scelta automatica colori intervalli di visualizzazione</text>
<text x="984.6" y="400" font-size="8.2" fill="#9a9a9a" font-weight="400" text-anchor="start" font-family='"Liberation Sans", sans-serif' textLength="77.4" lengthAdjust="spacingAndGlyphs" >Scelta colori intervalli</text>
<rect x="983" y="419" width="8" height="7.6" fill="#fff" stroke="#555" stroke-width="0.9" />
<text x="993.5" y="426" font-size="8.2" fill="#222" font-weight="400" text-anchor="start" font-family='"Liberation Sans", sans-serif' textLength="133.5" lengthAdjust="spacingAndGlyphs" >Sintetizzare la stampa delle superfici</text>
<rect x="0" y="627" width="1200" height="11" fill="#f0f0f0" stroke="none" stroke-width="1" />
<rect x="0" y="629.5" width="389" height="8.5" fill="#fff" stroke="none" stroke-width="1" />
<text x="6" y="640" font-size="8" fill="#333" font-weight="400" text-anchor="start" font-family='"Liberation Sans", sans-serif' textLength="37" lengthAdjust="spacingAndGlyphs" >10.49, 10.55</text>
<rect x="67" y="630" width="4" height="8" fill="#2b579a" stroke="none" stroke-width="1" />
<text x="73" y="640" font-size="8" fill="#333" font-weight="400" text-anchor="start" font-family='"Liberation Sans", sans-serif' textLength="102" lengthAdjust="spacingAndGlyphs" >xc=2.5 yc=8.0 Rc=6.24 F=2.1418</text>
<rect x="389" y="630" width="811" height="8" fill="#2b579a" stroke="none" stroke-width="1" />
<rect x="459" y="630" width="84" height="8" fill="#b8b8b8" stroke="none" stroke-width="1" />
<text x="403" y="640" font-size="8" fill="#fff" font-weight="400" text-anchor="start" font-family='"Liberation Sans", sans-serif' textLength="17" lengthAdjust="spacingAndGlyphs" >Snap</text>
<rect x="393" y="632" width="6" height="6" fill="#5a78b0" stroke="none" stroke-width="1" />
<path d="M429,634 l2,-2 l2,2" fill="none" stroke="#dfe6f3" stroke-width="0.9"/>
<text x="435.7" y="640" font-size="8" fill="#fff" font-weight="400" text-anchor="start" font-family='"Liberation Sans", sans-serif' textLength="23" lengthAdjust="spacingAndGlyphs" >Griglia</text>
<text x="461" y="640" font-size="8" fill="#5a5a5a" font-weight="400" text-anchor="start" font-family='"Liberation Sans", sans-serif' textLength="80" lengthAdjust="spacingAndGlyphs" >Visual.conci  Visual.raggi</text>
<text x="545" y="640" font-size="8" fill="#fff" font-weight="400" text-anchor="start" font-family='"Liberation Sans", sans-serif' textLength="74" lengthAdjust="spacingAndGlyphs" >Nr. conci  Linee guida</text>
<circle cx="624" cy="634.5" r="3" fill="none" stroke="#fff" stroke-width="0.8"/><path d="M621,634.5h6M624,631.5v6" stroke="#fff" stroke-width="0.6"/>
<text x="629" y="640" font-size="8" fill="#fff" font-weight="400" text-anchor="start" font-family='"Liberation Sans", sans-serif' textLength="31" lengthAdjust="spacingAndGlyphs" >Lingua:IT</text>
<text x="948" y="640" font-size="8" fill="#fff" font-weight="400" text-anchor="start" font-family='"Liberation Sans", sans-serif' textLength="182" lengthAdjust="spacingAndGlyphs" >GEOSTRU SLOPE 2025.32.8.1720 E.CTNZRT@GMAIL.COM</text>
<path d="M1138,638 v-4 l3,-2 h4 v6z" fill="#e8eef8"/>
<text x="1145" y="640" font-size="8" fill="#fff" font-weight="400" text-anchor="start" font-family='"Liberation Sans", sans-serif' textLength="50" lengthAdjust="spacingAndGlyphs" >Unità di misura</text>
</svg></body></html>
